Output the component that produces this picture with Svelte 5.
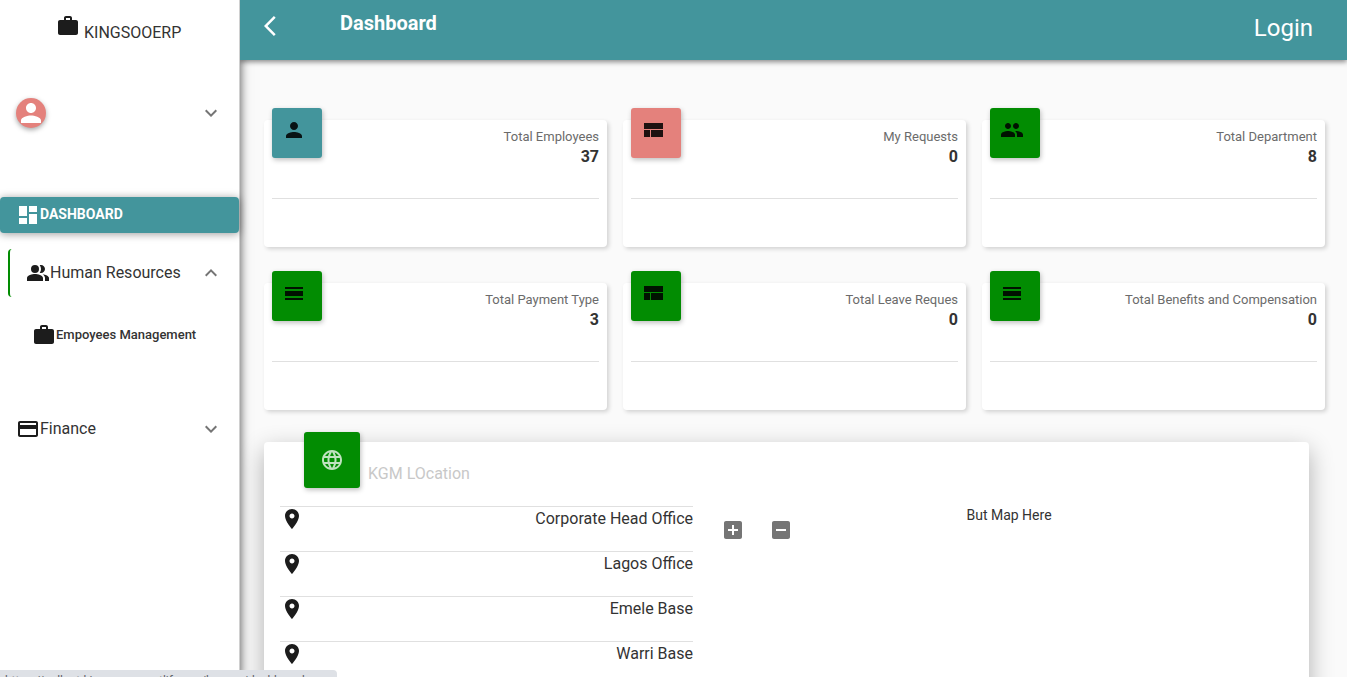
<script>
  const icons = {
    work: 'M20 6h-4V4c0-1.11-.89-2-2-2h-4c-1.11 0-2 .89-2 2v2H4c-1.11 0-1.99.89-1.99 2L2 19c0 1.11.89 2 2 2h16c1.11 0 2-.89 2-2V8c0-1.11-.89-2-2-2zm-6 0h-4V4h4v2z',
    more: 'M16.59 8.59L12 13.17 7.41 8.59 6 10l6 6 6-6z',
    less: 'M12 8l-6 6 1.41 1.41L12 10.83l4.59 4.58L18 14z',
    dashboard: 'M3 13h8V3H3v10zm0 8h8v-6H3v6zm10 0h8V11h-8v10zm0-18v6h8V3h-8z',
    peopleAlt: 'M16.67 13.13C18.04 14.06 19 15.32 19 17v3h4v-3c0-2.18-3.57-3.47-6.33-3.87zM9 4a4 4 0 1 0 0 8 4 4 0 0 0 0-8zM15 12c2.21 0 4-1.79 4-4s-1.79-4-4-4c-.47 0-.91.1-1.33.24C14.5 5.27 15 6.58 15 8s-.5 2.73-1.33 3.76c.42.14.86.24 1.33.24zM9 13c-2.67 0-8 1.34-8 4v3h16v-3c0-2.66-5.33-4-8-4z',
    card: 'M20 4H4c-1.11 0-1.99.89-1.99 2L2 18c0 1.11.89 2 2 2h16c1.11 0 2-.89 2-2V6c0-1.11-.89-2-2-2zm0 14H4v-6h16v6zm0-10H4V6h16v2z',
    back: 'M11.67 3.87L9.9 2.1 0 12l9.9 9.9 1.77-1.77L3.54 12z',
    person: 'M12 12c2.21 0 4-1.79 4-4s-1.79-4-4-4-4 1.79-4 4 1.79 4 4 4zm0 2c-2.67 0-8 1.34-8 4v2h16v-2c0-2.66-5.33-4-8-4z',
    compact: 'M3 19h6v-7H3v7zm7 0h12v-7H10v7zM3 5v6h19V5H3z',
    people: 'M16 11c1.66 0 2.99-1.34 2.99-3S17.66 5 16 5c-1.66 0-3 1.34-3 3s1.34 3 3 3zm-8 0c1.66 0 2.99-1.34 2.99-3S9.66 5 8 5C6.34 5 5 6.34 5 8s1.34 3 3 3zm0 2c-2.33 0-7 1.17-7 3.5V19h14v-2.5c0-2.33-4.67-3.5-7-3.5zm8 0c-.29 0-.62.02-.97.05 1.16.84 1.97 1.97 1.97 3.45V19h6v-2.5c0-2.33-4.67-3.5-7-3.5z',
    day: 'M3 17h18v2H3zM3 10h18v5H3zM3 6h18v2H3z',
    globe: 'M11.99 2C6.47 2 2 6.48 2 12s4.47 10 9.99 10C17.52 22 22 17.52 22 12S17.52 2 11.99 2zm6.93 6h-2.95c-.32-1.25-.78-2.45-1.38-3.56 1.84.63 3.37 1.91 4.33 3.56zM12 4.04c.83 1.2 1.48 2.53 1.91 3.96h-3.82c.43-1.43 1.08-2.76 1.91-3.96zM4.26 14C4.1 13.36 4 12.69 4 12s.1-1.36.26-2h3.38c-.08.66-.14 1.32-.14 2 0 .68.06 1.34.14 2H4.26zm.82 2h2.95c.32 1.25.78 2.45 1.38 3.56-1.84-.63-3.37-1.9-4.33-3.56zm2.95-8H5.08c.96-1.66 2.49-2.93 4.33-3.56C8.81 5.55 8.35 6.75 8.03 8zM12 19.96c-.83-1.2-1.48-2.53-1.91-3.96h3.82c-.43 1.43-1.08 2.76-1.91 3.96zM14.34 14H9.66c-.09-.66-.16-1.32-.16-2 0-.68.07-1.35.16-2h4.68c.09.65.16 1.32.16 2 0 .68-.07 1.34-.16 2zm.25 5.56c.6-1.11 1.06-2.31 1.38-3.56h2.95c-.96 1.65-2.49 2.93-4.33 3.56zM16.36 14c.08-.66.14-1.32.14-2 0-.68-.06-1.34-.14-2h3.38c.16.64.26 1.31.26 2s-.1 1.36-.26 2h-3.38z',
    pin: 'M12 2C8.13 2 5 5.13 5 9c0 5.25 7 13 7 13s7-7.75 7-13c0-3.87-3.13-7-7-7zm0 9.5c-1.38 0-2.5-1.12-2.5-2.5s1.12-2.5 2.5-2.5 2.5 1.12 2.5 2.5-1.12 2.5-2.5 2.5z',
    plus: 'M19 3H5c-1.11 0-2 .9-2 2v14c0 1.1.89 2 2 2h14c1.1 0 2-.9 2-2V5c0-1.1-.9-2-2-2zm-2 10h-4v4h-2v-4H7v-2h4V7h2v4h4v2z',
    minus: 'M19 3H5c-1.1 0-2 .9-2 2v14c0 1.1.9 2 2 2h14c1.1 0 2-.9 2-2V5c0-1.1-.9-2-2-2zm-2 10H7v-2h10v2z'
  };

  const stats = [
    { label: 'Total Employees', value: 37, icon: 'person', tone: 'teal' },
    { label: 'My Requests', value: 0, icon: 'compact', tone: 'coral' },
    { label: 'Total Department', value: 8, icon: 'people', tone: 'green' },
    { label: 'Total Payment Type', value: 3, icon: 'day', tone: 'green' },
    { label: 'Total Leave Reques', value: 0, icon: 'compact', tone: 'green' },
    { label: 'Total Benefits and Compensation', value: 0, icon: 'day', tone: 'green' }
  ];

  const locations = ['Corporate Head Office', 'Lagos Office', 'Emele Base', 'Warri Base'];

  let hrOpen = $state(true);
</script>

{#snippet icon(name)}
  <svg class="icon" viewBox="0 0 24 24" aria-hidden="true"><path d={icons[name]} /></svg>
{/snippet}

<div class="app">
  <aside class="sidebar">
    <div class="brand">{@render icon('work')}<span>KINGSOOERP</span></div>

    <button class="profile" aria-label="Account">
      <span class="avatar">{@render icon('person')}</span>
      <span class="chevron">{@render icon('more')}</span>
    </button>

    <nav>
      <a class="active" href="#dashboard">{@render icon('dashboard')}<span>DASHBOARD</span></a>
      <button class="group open" aria-expanded={hrOpen} onclick={() => (hrOpen = !hrOpen)}>
        {@render icon('peopleAlt')}<span>Human Resources</span>
        <span class="chevron">{@render icon(hrOpen ? 'less' : 'more')}</span>
      </button>
      {#if hrOpen}
        <a class="sub" href="#employees">{@render icon('work')}<span>Empoyees Management</span></a>
      {/if}
      <button class="group" aria-expanded="false">
        {@render icon('card')}<span>Finance</span>
        <span class="chevron">{@render icon('more')}</span>
      </button>
    </nav>
  </aside>

  <div class="page">
    <header>
      <button class="back" aria-label="Back">{@render icon('back')}</button>
      <h1>Dashboard</h1>
      <a class="login" href="#login">Login</a>
    </header>

    <main>
      <section class="stats">
        {#each stats as s}
          <article class="stat">
            <div class="top">
              <div class="tile {s.tone}">{@render icon(s.icon)}</div>
              <div class="figures">
                <p>{s.label}</p>
                <strong>{s.value}</strong>
              </div>
            </div>
          </article>
        {/each}
      </section>

      <section class="panel">
        <div class="heading">
          <div class="tile green large">{@render icon('globe')}</div>
          <h2>KGM LOcation</h2>
        </div>
        <div class="body">
          <ul>
            {#each locations as place}
              <li>{@render icon('pin')}<span>{place}</span></li>
            {/each}
          </ul>
          <div class="map">
            <div class="zoom">
              <button aria-label="Zoom in">{@render icon('plus')}</button>
              <button aria-label="Zoom out">{@render icon('minus')}</button>
            </div>
            <p>But Map Here</p>
          </div>
        </div>
      </section>
    </main>
  </div>

  <div class="status">https://gallant-kingsooerp.netlify.app/human/dashboard</div>
</div>

<style>
  :global(body) {
    background: #fafafa;
  }
  .app {
    display: flex;
    position: relative;
    height: 100vh;
    overflow: hidden;
    font-family: Roboto, 'Liberation Sans', sans-serif;
    font-size: 16px;
    line-height: 24px;
    color: #333;
  }
  .app :global(*) {
    box-sizing: border-box;
  }
  h1, h2, p, ul {
    margin: 0;
    padding: 0;
    list-style: none;
  }
  button {
    border: 0;
    padding: 0;
    background: none;
    font: inherit;
    color: inherit;
    text-align: left;
    cursor: pointer;
  }
  a {
    color: inherit;
    text-decoration: none;
  }
  .icon {
    display: block;
    flex: none;
    width: 24px;
    height: 24px;
    fill: currentColor;
  }
  .brand > .icon,
  .group > .icon,
  .sub > .icon,
  li > .icon {
    fill: #1c1c1c;
  }

  .sidebar {
    flex: none;
    width: 240px;
    background: #fff;
    border-right: 1px solid #d0d0d0;
    box-shadow: 0 2px 10px rgba(0, 0, 0, 0.7);
  }
  .brand {
    display: flex;
    gap: 4px;
    padding: 14px 0 0 56px;
  }
  .brand span {
    padding-top: 7px;
  }
  .profile {
    display: flex;
    align-items: center;
    width: 100%;
    padding: 0 16px;
    margin: 53px 0 69px;
  }
  .avatar {
    display: grid;
    place-items: center;
    width: 30px;
    height: 30px;
    border-radius: 50%;
    background: #e4817c;
    color: #fff;
    box-shadow: 0 2px 5px rgba(0, 0, 0, 0.35);
  }
  .avatar .icon {
    width: 30px;
    height: 30px;
  }
  .chevron {
    margin-left: auto;
    color: #757575;
  }
  nav {
    display: flex;
    flex-direction: column;
  }
  .active {
    display: flex;
    align-items: center;
    height: 36px;
    padding-left: 16px;
    border-radius: 4px;
    background: #43959c;
    color: #fff;
    font-size: 14px;
    font-weight: 700;
    box-shadow: 0 1px 8px rgba(0, 0, 0, 0.4);
  }
  .active span {
    padding-bottom: 2px;
  }
  .group {
    display: flex;
    align-items: center;
    height: 48px;
    padding: 0 16px;
  }
  .group.open {
    margin: 16px 0 0 8px;
    border-left: 2px solid #028c02;
    border-radius: 4px;
  }
  .sub {
    display: flex;
    align-items: center;
    height: 48px;
    margin: 14px 0 46px;
    padding-left: 32px;
    font-size: 13px;
    font-weight: 500;
  }

  .page {
    position: relative;
    flex: 1;
    min-width: 0;
    overflow: hidden;
  }
  header {
    display: flex;
    position: relative;
    height: 60px;
    padding: 0 34px 0 24px;
    background: #43959c;
    color: #fff;
    box-shadow: 0 2px 5px rgba(0, 0, 0, 0.45);
  }
  .back {
    align-self: flex-start;
    margin-top: 14px;
  }
  h1 {
    padding: 7px 0 0 52px;
    font-size: 20px;
    line-height: 32px;
    font-weight: 700;
  }
  .login {
    margin-left: auto;
    padding-top: 12px;
    font-size: 24px;
    line-height: 32px;
  }
  main {
    padding: 60px 22px 0 24px;
  }
  .stats {
    display: grid;
    grid-template-columns: repeat(3, 1fr);
    gap: 36px 16px;
  }
  .stat {
    height: 127px;
    padding: 0 8px;
    border-radius: 4px;
    background: #fff;
    box-shadow: 2px 2px 4px rgba(0, 0, 0, 0.16);
  }
  .top {
    display: flex;
    justify-content: space-between;
    height: 79px;
    border-bottom: 1px solid #e0e0e0;
  }
  .tile {
    flex: none;
    width: 50px;
    height: 50px;
    margin-top: -12px;
    padding: 10px;
    border-radius: 3px;
    color: rgba(0, 0, 0, 0.87);
    box-shadow: 1px 2px 5px rgba(0, 0, 0, 0.25);
  }
  .teal {
    background: #43959c;
  }
  .coral {
    background: #e4817c;
  }
  .green {
    background: #028c02;
  }
  .figures {
    padding-top: 7px;
    text-align: right;
  }
  .figures p {
    font-size: 13px;
    line-height: 20px;
    color: #6b6b6b;
  }
  .figures strong {
    display: block;
    line-height: 20px;
  }
  .panel {
    margin: 32px 16px 0 0;
    min-height: 400px;
    border-radius: 4px;
    background: #fff;
    box-shadow: 0 8px 24px rgba(0, 0, 0, 0.3);
  }
  .heading {
    display: flex;
    gap: 8px;
    height: 64px;
    padding-left: 40px;
  }
  .large {
    width: 56px;
    height: 56px;
    margin-top: -10px;
    padding: 16px;
    color: rgba(255, 255, 255, 0.75);
  }
  h2 {
    padding-top: 20px;
    font-size: 16px;
    font-weight: 400;
    color: #c8c8c8;
  }
  .body {
    display: grid;
    grid-template-columns: 445fr 600fr;
  }
  ul {
    padding: 0 16px;
  }
  li {
    display: flex;
    justify-content: space-between;
    height: 45px;
    border-top: 1px solid #e0e0e0;
  }
  .map {
    position: relative;
    text-align: center;
    font-size: 14px;
    line-height: 18px;
  }
  .zoom {
    display: flex;
    position: absolute;
    top: 0;
    left: 0;
    color: #757575;
  }
  .zoom button {
    padding: 12px;
  }
  .status {
    position: absolute;
    left: 0;
    bottom: 0;
    width: 337px;
    height: 7px;
    padding: 2px 0 0 5px;
    overflow: hidden;
    border-top-right-radius: 4px;
    background: #dee1e6;
    color: #5f6368;
    font-size: 12px;
    line-height: 18px;
  }
</style>
